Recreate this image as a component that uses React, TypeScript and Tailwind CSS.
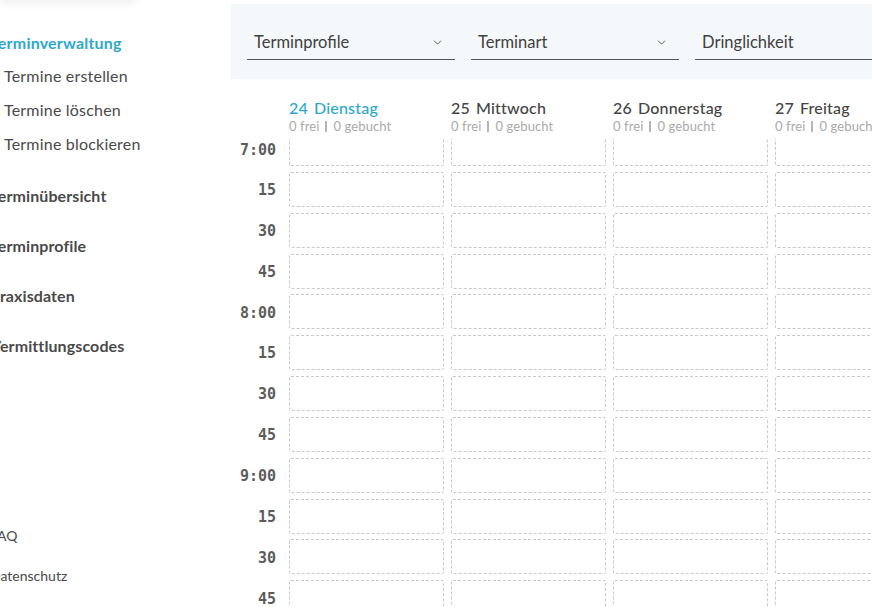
import { ChevronDown } from 'lucide-react';

const days = [
  { num: '24', name: 'Dienstag', today: true },
  { num: '25', name: 'Mittwoch', today: false },
  { num: '26', name: 'Donnerstag', today: false },
  { num: '27', name: 'Freitag', today: false },
];

const slots = ['7:00', '15', '30', '45', '8:00', '15', '30', '45', '9:00', '15', '30', '45'];

const filters = ['Terminprofile', 'Terminart', 'Dringlichkeit'];

function Sidebar() {
  return (
    <aside className="w-[231px] shrink-0 overflow-hidden">
      <div className="-mt-[20px] h-[20px] w-[135px] shadow-[0_3px_10px_rgba(0,0,0,0.07)]" />
      <nav className="-ml-[10px] flex h-[587px] flex-col font-['Lato',sans-serif]">
        <p className="mt-[33px] text-[16px] font-bold leading-[20px] tracking-[0.2px] text-[#2ea7cf]">
          Terminverwaltung
        </p>
        <ul className="ml-[14px] mt-[13px] space-y-[14px] text-[16px] leading-[20px] tracking-[0.2px] text-[#4a4a4a]">
          <li>Termine erstellen</li>
          <li>Termine löschen</li>
          <li>Termine blockieren</li>
        </ul>
        <div className="mt-[32px] space-y-[30px] text-[16px] font-bold leading-[20px] tracking-[0.1px] text-[#4a4a4a]">
          <p>Terminübersicht</p>
          <p>Terminprofile</p>
          <p>Praxisdaten</p>
          <p>Vermittlungscodes</p>
        </div>
        <div className="mt-auto mb-[1px] space-y-[20px] text-[14px] leading-[20px] text-[#4a4a4a]">
          <p>FAQ</p>
          <p>Datenschutz</p>
        </div>
      </nav>
    </aside>
  );
}

function FilterBar() {
  return (
    <div className="flex h-[75px] items-start gap-4 bg-[#f5f8fb] px-4 pt-[26px]">
      {filters.map((label, i) => (
        <div
          key={label}
          className="flex w-[208px] shrink-0 items-center justify-between border-b border-[#555] px-[7px] pb-[5px] text-[16.5px] leading-[24px] text-[#3f3f3f]"
        >
          <span>{label}</span>
          {i < 2 ? <ChevronDown size={13} strokeWidth={1.75} className="mr-[4px] text-[#555]" /> : null}
        </div>
      ))}
    </div>
  );
}

function Calendar() {
  return (
    <div className="mt-[19px] flex font-['Lato',sans-serif]">
      <div className="w-[50px] shrink-0 pr-[5px] text-right font-['DejaVu_Sans_Mono',monospace] text-[15px] font-bold text-[#5c5c5c]">
        <div className="h-[41px]" />
        {slots.map((t, i) => (
          <div
            key={i}
            className={i === 0 ? 'flex h-[28px] items-start' : 'mt-[5.85px] flex h-[35px] items-center'}
          >
            <span className="w-full">{t}</span>
          </div>
        ))}
      </div>
      <div className="ml-[8px] flex gap-[7px]">
        {days.map((d) => (
          <div key={d.num} className="w-[155px] shrink-0">
            <div className="h-[41px]">
              <p
                className={`text-[16px] font-medium leading-[20px] tracking-[0.2px] ${
                  d.today ? 'text-[#2ea7cf]' : 'text-[#444]'
                }`}
              >
                <span className="mr-[6px]">{d.num}</span>
                {d.name}
              </p>
              <p className="flex items-center whitespace-nowrap text-[13px] leading-[16px] tracking-[0.1px] text-[#aaa]">
                <span>0 frei</span>
                <span className="mx-[6px] h-[11px] w-[2px] bg-[#b5b5b5]" />
                <span>0 gebucht</span>
              </p>
            </div>
            {slots.map((_, i) => (
              <div
                key={i}
                className={
                  i === 0
                    ? 'h-[27px] rounded-b-[2px] border border-t-0 border-dashed border-[#c9c9c9]'
                    : 'mt-[5.85px] h-[35px] rounded-[2px] border border-dashed border-[#c9c9c9]'
                }
              />
            ))}
          </div>
        ))}
      </div>
    </div>
  );
}

export default function App() {
  return (
    <div className="flex h-[607px] w-[872px] overflow-hidden bg-white font-['Lato',sans-serif]">
      <Sidebar />
      <main className="min-w-0 flex-1 overflow-hidden pt-[4px]">
        <FilterBar />
        <Calendar />
      </main>
    </div>
  );
}
